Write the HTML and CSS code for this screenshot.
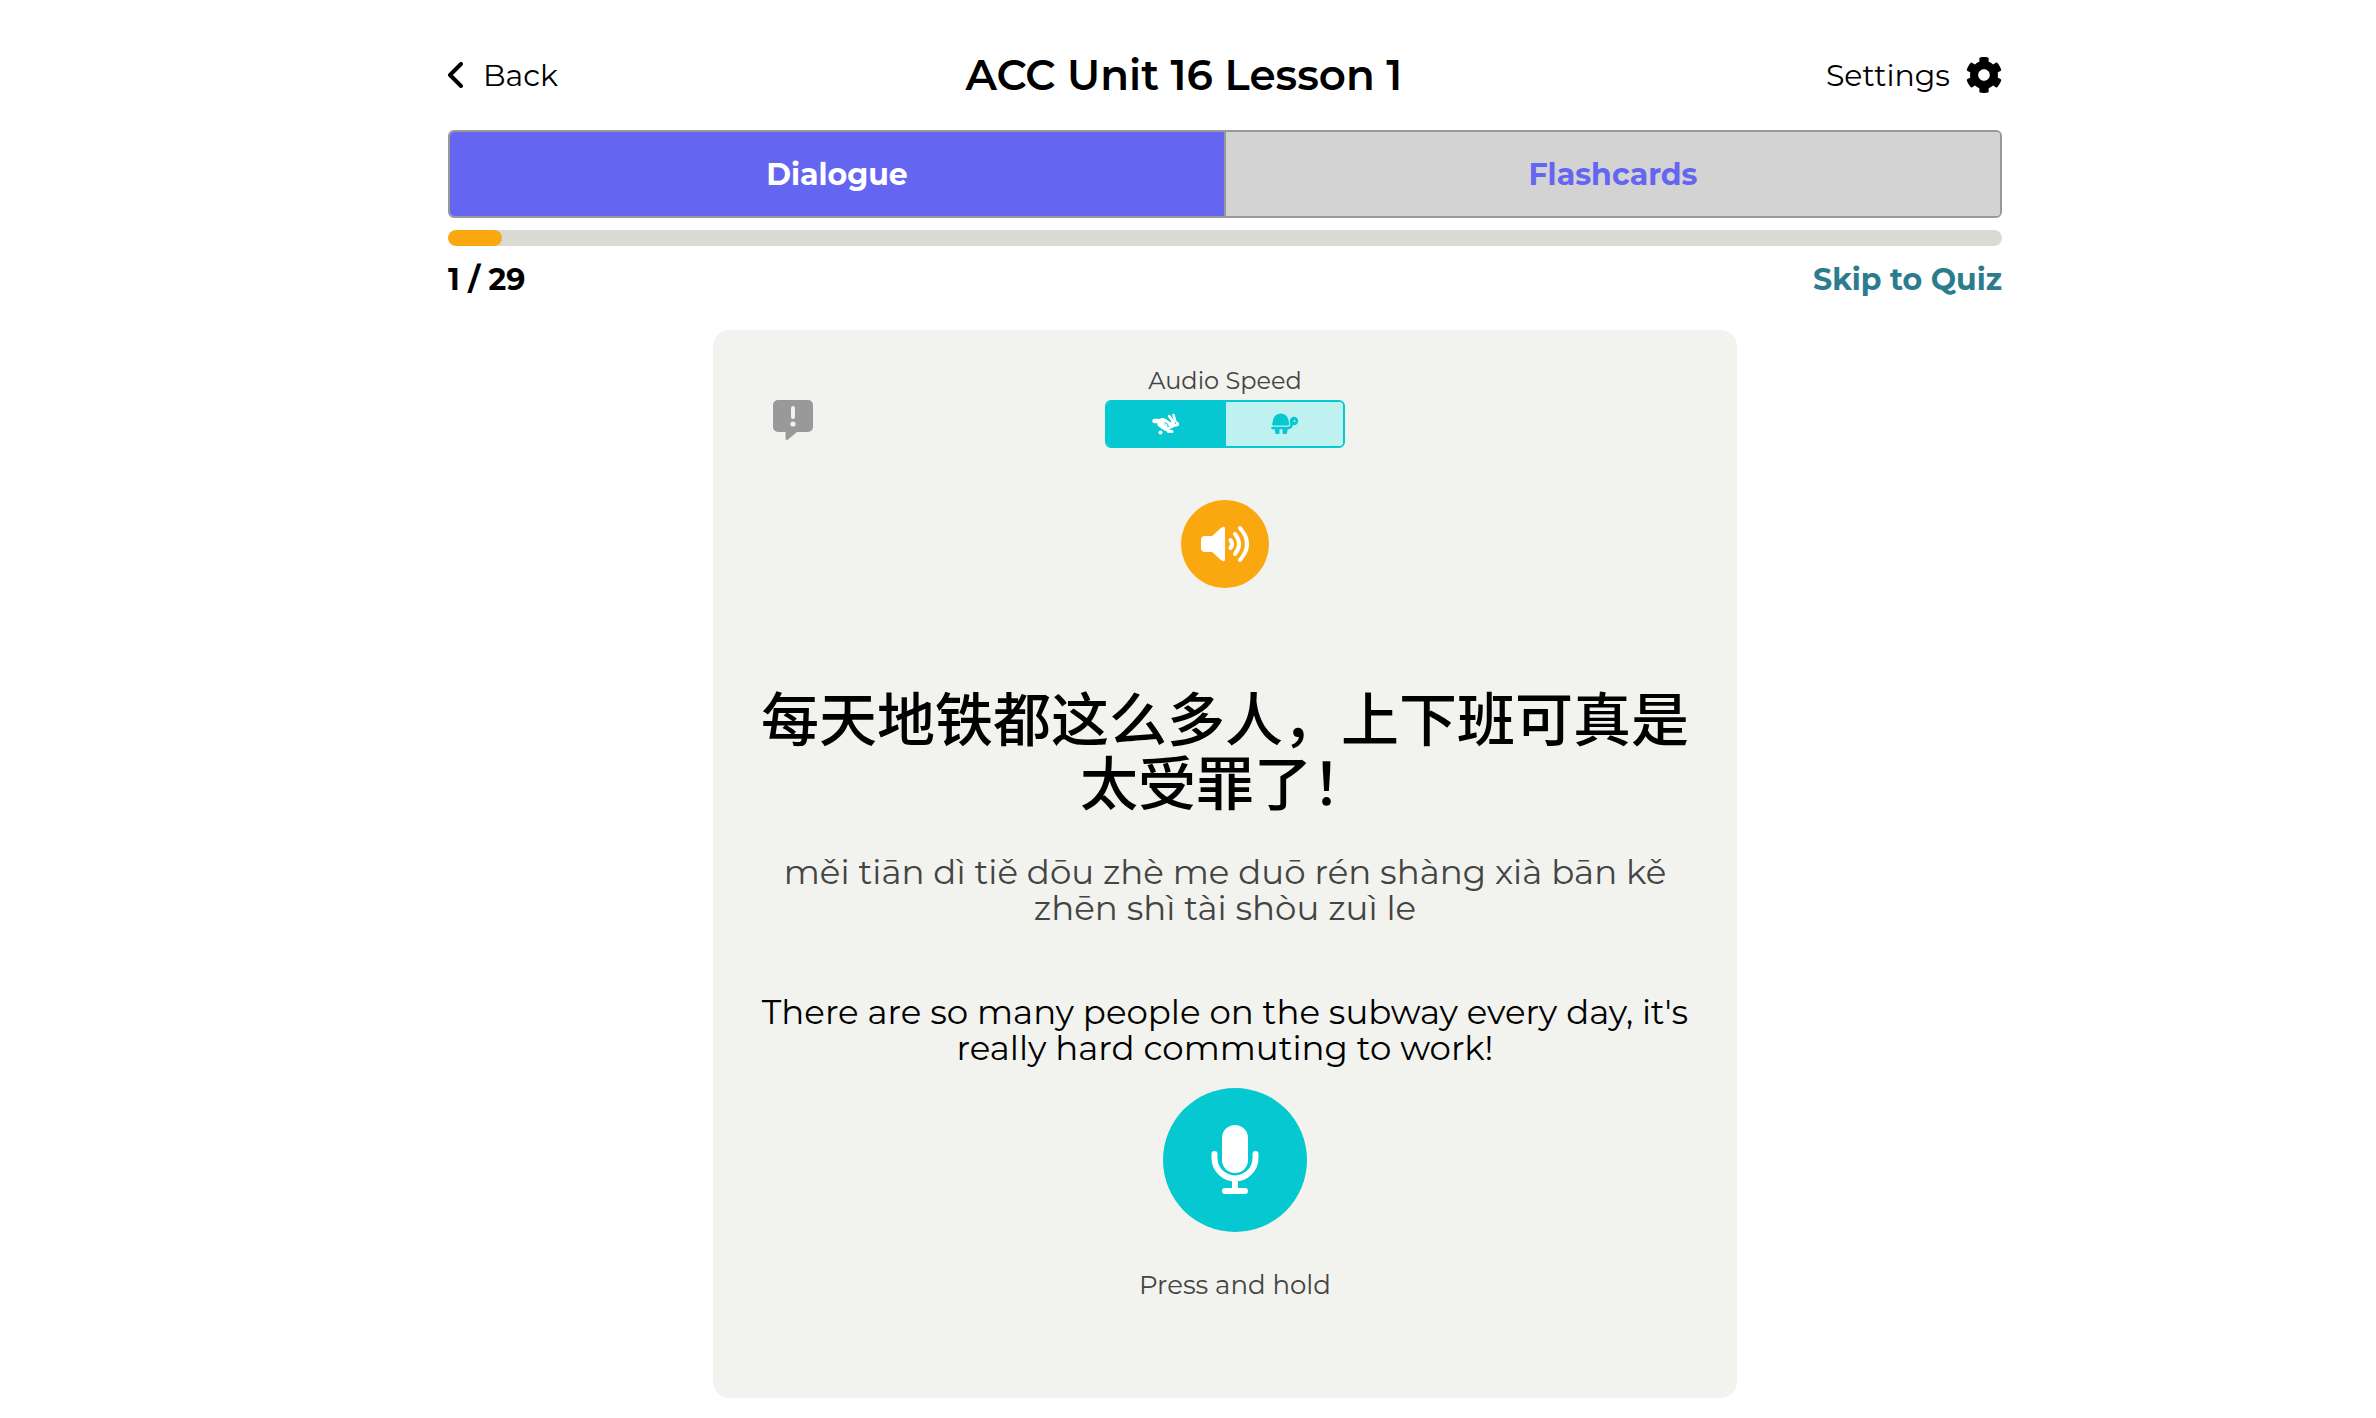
FILE: index.html
```html
<!DOCTYPE html>
<html lang="en">
  <head>
    <meta charset="UTF-8" />
    <meta name="viewport" content="width=device-width, initial-scale=1.0" />
    <title>ACC Unit 16 Lesson 1</title>
    <link rel="stylesheet" href="styles.css">
  </head>
  <body>
    <main class="lesson">
      <header class="topbar">
        <button class="nav-btn back" type="button">
          <svg class="chevron" viewBox="0 0 15 26" aria-hidden="true">
            <path d="M13 2 2 13l11 11" />
          </svg>
          Back
        </button>
        <h1>ACC Unit 16 Lesson 1</h1>
        <button class="nav-btn settings" type="button">
          Settings
          <svg class="gear" viewBox="8 8 496 496" aria-hidden="true">
            <path d="M487.4 315.7l-42.6-24.6c4.3-23.2 4.3-47 0-70.2l42.6-24.6c4.9-2.8 7.1-8.6 5.5-14-11.1-35.6-30-67.8-54.7-94.6-3.8-4.1-10-5.1-14.8-2.3L380.8 110c-17.9-15.4-38.5-27.3-60.8-35.1V25.8c0-5.6-3.9-10.5-9.4-11.7-36.7-8.2-74.3-7.8-109.2 0-5.5 1.2-9.4 6.1-9.4 11.7V75c-22.2 7.9-42.8 19.8-60.8 35.1L88.7 85.5c-4.9-2.8-11-1.9-14.8 2.3-24.7 26.7-43.6 58.9-54.7 94.6-1.7 5.4.6 11.2 5.5 14L67.3 221c-4.3 23.2-4.3 47 0 70.2l-42.6 24.6c-4.9 2.8-7.1 8.6-5.5 14 11.1 35.6 30 67.8 54.7 94.6 3.8 4.1 10 5.1 14.8 2.3l42.6-24.6c17.9 15.4 38.5 27.3 60.8 35.1v49.2c0 5.6 3.9 10.5 9.4 11.7 36.7 8.2 74.3 7.8 109.2 0 5.5-1.2 9.4-6.1 9.4-11.7v-49.2c22.2-7.9 42.8-19.8 60.8-35.1l42.6 24.6c4.9 2.8 11 1.9 14.8-2.3 24.7-26.7 43.6-58.9 54.7-94.6 1.5-5.5-.7-11.3-5.6-14.1zM256 336c-44.1 0-80-35.9-80-80s35.9-80 80-80 80 35.9 80 80-35.9 80-80 80z" />
          </svg>
        </button>
      </header>

      <nav class="tabs">
        <button class="tab active" type="button">Dialogue</button>
        <button class="tab" type="button">Flashcards</button>
      </nav>

      <div class="progress">
        <div class="progress-fill" style="width: 3.45%"></div>
      </div>
      <div class="status">
        <span>1 / 29</span>
        <a class="skip" href="#quiz">Skip to Quiz</a>
      </div>

      <section class="card">
        <div class="card-top">
          <button class="report" type="button" aria-label="Report a problem">
            <svg viewBox="0 0 40 40" aria-hidden="true">
              <path fill="#999" d="M5 0h30a5 5 0 0 1 5 5v22a5 5 0 0 1-5 5H24l-9 7.500q-2.500 1.500-2.500-1.500V32H5a5 5 0 0 1-5-5V5a5 5 0 0 1 5-5z" />
              <path stroke="#f2f3ee" stroke-width="4" stroke-linecap="round" d="M20 8v9" />
              <circle cx="20" cy="24" r="2.600" fill="#f2f3ee" />
            </svg>
          </button>
          <div class="speed">
            <span class="speed-label">Audio Speed</span>
            <div class="speed-toggle">
              <button class="speed-btn active" type="button" aria-label="Normal speed">
                <svg viewBox="0 0 28 22" aria-hidden="true">
                  <g fill="none" stroke="currentColor" stroke-linecap="round" stroke-linejoin="round">
                    <path stroke-width="4.500" d="M2.500 8h3" />
                    <path stroke-width="5" d="M7 9q3-2.500 6-.5l4 3M8 11.500l5 3.500" />
                    <path stroke-width="3" d="M13 14.500l3.500 4h3.500M16.500 15.500l6-3.500" />
                    <path stroke-width="5" d="M20 11h4.500" />
                    <path stroke-width="2.600" d="M17 3l4.500 6M21.500 2l2 7" />
                  </g>
                  <circle cx="8.500" cy="19.500" r="2" fill="currentColor" />
                  <circle cx="23.500" cy="10" r="0.800" fill="#05c8d0" />
                  <path fill="none" stroke="#05c8d0" stroke-width="1" d="M12.500 9.500q4 1 4 4.500" />
                </svg>
              </button>
              <button class="speed-btn" type="button" aria-label="Slow speed">
                <svg viewBox="0 0 28 22" aria-hidden="true">
                  <path fill="currentColor" d="M2.500 12.500q-1.500 0-1.300-1.500Q2 .5 9.800.5T18.200 11q.2 1.500-1.300 1.500zM3.500 15h5v5q0 1-1 1h-2q-1 0-1.200-1zM11.500 15h5.500l-1 5q-.2 1-1.200 1h-2.300q-1 0-1-1z" />
                  <path fill="none" stroke="currentColor" stroke-width="2.600" stroke-linecap="round" stroke-linejoin="round" d="M1.500 15h16q3 0 3.200-5" />
                  <circle cx="23" cy="8" r="4.200" fill="currentColor" />
                  <circle cx="23.500" cy="8" r="1" fill="#c0f1f1" />
                </svg>
              </button>
            </div>
          </div>
        </div>

        <button class="play" type="button" aria-label="Play audio">
          <svg viewBox="0 0 48 36" aria-hidden="true">
            <path fill="#fff" d="M4 10h7L20 2q4-3 4 1v30q0 4-4 1l-9-8H4q-4 0-4-4v-8q0-4 4-4z" />
            <path class="wave" d="M29.500 14q3 4 0 8M34 8q8 10 0 20M39 2q14 16 0 32" />
          </svg>
        </button>

        <p class="hanzi" lang="zh-CN">每天地铁都这么多人，上下班可真是太受罪了！</p>
        <p class="pinyin">měi tiān dì tiě dōu zhè me duō rén shàng xià bān kě zhēn shì tài shòu zuì le</p>
        <p class="translation">There are so many people on the subway every day, it's really hard commuting to work!</p>

        <div class="recorder">
          <button class="record" type="button" aria-label="Record">
            <svg viewBox="0 0 48 70" aria-hidden="true">
              <rect x="11" y="0" width="26" height="48" rx="13" fill="#fff" />
              <path class="stand" d="M3.500 29v4a20.500 20.500 0 0 0 41 0v-4M24 54v11M14 66h20" />
            </svg>
          </button>
          <p class="hint">Press and hold</p>
        </div>
      </section>
    </main>
  </body>
</html>
```
FILE: styles.css
```css
* {
  margin: 0;
  padding: 0;
  box-sizing: border-box;
}
body {
  padding: 0 16px 20px 90px;
  background-color: #fff;
  color: #000;
  font-family: Montserrat, Inter, "Noto Sans CJK SC", sans-serif;
}
button {
  border: none;
  background: none;
  color: inherit;
  font: inherit;
  cursor: pointer;
}
svg {
  display: block;
}
.lesson {
  max-width: 1554px;
  margin: 0 auto;
}
.topbar {
  display: flex;
  align-items: center;
  justify-content: space-between;
  padding: 50px 0 30px;
}
.topbar h1 {
  font-size: 42px;
  font-weight: 600;
  line-height: 50px;
}
.nav-btn {
  display: flex;
  align-items: center;
  gap: 20px;
  font-size: 30px;
}
.chevron {
  width: 15px;
  height: 26px;
  fill: none;
  stroke: #000;
  stroke-width: 4;
  stroke-linecap: round;
  stroke-linejoin: round;
}
.settings {
  gap: 16px;
  padding-left: 16px;
}
.gear {
  width: 36px;
  height: 36px;
}
.tabs {
  display: flex;
  border: 2px solid #999;
  border-radius: 6px;
  overflow: hidden;
}
.tab {
  flex: 1;
  height: 84px;
  background-color: #d3d3d3;
  color: #6466f1;
  font-size: 30px;
  font-weight: 700;
}
.tab + .tab {
  border-left: 2px solid #999;
}
.tab.active {
  background-color: #6466f1;
  color: #fff;
}
.progress {
  height: 16px;
  margin-top: 12px;
  border-radius: 8px;
  background-color: #dadbd5;
  overflow: hidden;
}
.progress-fill {
  height: 100%;
  border-radius: 8px;
  background-color: #faa80f;
}
.status {
  display: flex;
  justify-content: space-between;
  margin: 14px 0 30px;
  font-size: 30px;
  font-weight: 700;
  line-height: 40px;
}
.skip {
  color: #2b7c8c;
  text-decoration: none;
}
.card {
  display: flex;
  flex-direction: column;
  align-items: center;
  max-width: 1024px;
  margin: 0 auto;
  padding: 34px 40px 96px;
  border-radius: 16px;
  background-color: #f2f3ee;
  text-align: center;
}
.card-top {
  display: grid;
  grid-template-columns: 1fr auto 1fr;
  align-items: end;
  width: 100%;
  padding: 0 20px;
}
.report {
  width: 40px;
  height: 40px;
  margin-bottom: 8px;
}
.speed-label {
  display: block;
  padding-bottom: 2px;
  color: #444;
  font-size: 24px;
  line-height: 34px;
}
.speed-toggle {
  display: flex;
  width: 240px;
  height: 48px;
  border: 2px solid #05c8d0;
  border-radius: 6px;
  overflow: hidden;
}
.speed-btn {
  display: flex;
  flex: 1;
  align-items: center;
  justify-content: center;
  background-color: #c0f1f1;
  color: #05c8d0;
}
.speed-btn + .speed-btn {
  border-left: 2px solid #05c8d0;
}
.speed-btn svg {
  width: 28px;
  height: 22px;
}
.speed-btn.active {
  background-color: #05c8d0;
  color: #fff;
}
.play {
  display: flex;
  align-items: center;
  justify-content: center;
  width: 88px;
  height: 88px;
  margin-top: 52px;
  border-radius: 50%;
  background-color: #faa80f;
}
.play svg {
  width: 48px;
  height: 36px;
}
.wave,
.stand {
  fill: none;
  stroke: #fff;
  stroke-width: 4;
  stroke-linecap: round;
}
.hanzi {
  margin-top: 96px;
  font-family: "Noto Sans CJK SC", sans-serif;
  font-size: 58px;
  font-weight: 500;
  line-height: 64px;
}
.pinyin {
  margin-top: 42px;
  color: #444;
  font-size: 34px;
  line-height: 36px;
}
.translation {
  margin-top: 68px;
  font-size: 34px;
  line-height: 36px;
}
.recorder {
  display: flex;
  flex-direction: column;
  align-items: center;
  margin-top: 22px;
  padding-left: 20px;
}
.record {
  display: flex;
  align-items: center;
  justify-content: center;
  width: 144px;
  height: 144px;
  border-radius: 50%;
  background-color: #05c8d0;
}
.record svg {
  width: 48px;
  height: 70px;
}
.stand {
  stroke-width: 6;
}
.hint {
  margin-top: 36px;
  color: #444;
  font-size: 26px;
  line-height: 34px;
}
```
